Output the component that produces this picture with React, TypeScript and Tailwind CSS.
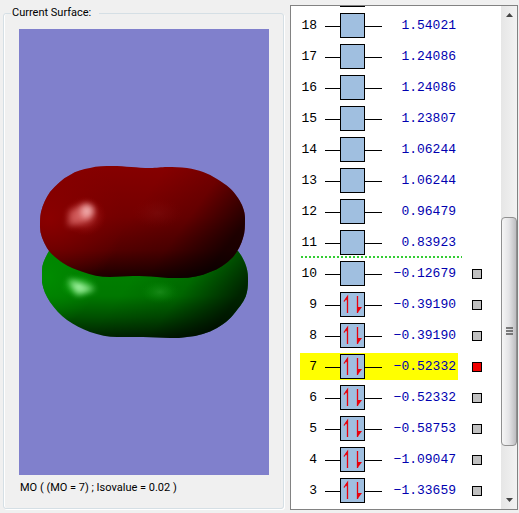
interface Orbital {
  mo: number;
  energy: string;
  occupied?: boolean;
  selectable?: boolean;
}

const LUMO_BOUNDARY = 11;
const SELECTED_MO = 7;

const orbitals: Orbital[] = [
  { mo: 18, energy: "1.54021" },
  { mo: 17, energy: "1.24086" },
  { mo: 16, energy: "1.24086" },
  { mo: 15, energy: "1.23807" },
  { mo: 14, energy: "1.06244" },
  { mo: 13, energy: "1.06244" },
  { mo: 12, energy: "0.96479" },
  { mo: 11, energy: "0.83923" },
  { mo: 10, energy: "−0.12679", selectable: true },
  { mo: 9, energy: "−0.39190", occupied: true, selectable: true },
  { mo: 8, energy: "−0.39190", occupied: true, selectable: true },
  { mo: 7, energy: "−0.52332", occupied: true, selectable: true },
  { mo: 6, energy: "−0.52332", occupied: true, selectable: true },
  { mo: 5, energy: "−0.58753", occupied: true, selectable: true },
  { mo: 4, energy: "−1.09047", occupied: true, selectable: true },
  { mo: 3, energy: "−1.33659", occupied: true, selectable: true },
];

const RED_LOBE =
  "M93 137C107 137 118 139 131 139C138 139 142 138 148 138C155 138 161 138 168 139C180 141 189 144 198 150C208 156 214 161 219 169C223 175 226 182 226 189C226 197 226 203 224 209C222 216 219 222 214 228C207 235 200 240 191 243C182 247 172 249 161 249C153 249 146 249 138 248C130 247 122 247 114 247C106 247 99 248 91 248C81 248 72 246 64 243C56 240 50 238 44 234C38 230 32 225 28 219C24 212 21 205 21 198C21 193 21 188 22 183C24 175 27 169 31 163C37 156 43 150 51 146C57 142 64 140 71 139C78 137 86 137 93 137Z";

const GREEN_LOBE =
  "M30 222C26 229 23 235 23 241V253C24 260 27 267 31 273C36 280 41 286 48 291C55 296 63 300 71 303C80 306 89 308 98 308H124C133 308 142 309 151 309C157 309 163 309 168 308C179 307 189 304 198 299C207 294 213 288 218 281C223 275 227 269 228 263C229 258 229 254 229 249C229 244 228 239 226 234C224 229 222 226 219 222L125 200Z";

function SurfaceView() {
  return (
    <svg viewBox="0 0 250 446" className="h-full w-full" role="img" aria-label="Molecular orbital 7">
      <defs>
        <linearGradient id="redBase" x1="0" y1="0" x2="0" y2="1">
          <stop offset="0" stopColor="#860000" />
          <stop offset="0.45" stopColor="#740000" />
          <stop offset="0.75" stopColor="#550000" />
          <stop offset="1" stopColor="#1c0000" />
        </linearGradient>
        <linearGradient id="greenBase" x1="0" y1="225" x2="0" y2="309" gradientUnits="userSpaceOnUse">
          <stop offset="0" stopColor="#008400" />
          <stop offset="0.5" stopColor="#007800" />
          <stop offset="0.75" stopColor="#005000" />
          <stop offset="1" stopColor="#002000" />
        </linearGradient>
        <linearGradient id="sideShade" x1="0.5" y1="0.3" x2="1" y2="0.5">
          <stop offset="0" stopColor="#000" stopOpacity="0" />
          <stop offset="0.5" stopColor="#000" stopOpacity="0.15" />
          <stop offset="1" stopColor="#000" stopOpacity="0.7" />
        </linearGradient>
        <radialGradient id="redEdge" cx="30" cy="190" r="75" gradientUnits="userSpaceOnUse">
          <stop offset="0" stopColor="#900000" stopOpacity="0.8" />
          <stop offset="1" stopColor="#880000" stopOpacity="0" />
        </radialGradient>
        <radialGradient id="greenEdge" cx="28" cy="248" r="50" gradientUnits="userSpaceOnUse">
          <stop offset="0" stopColor="#008c00" />
          <stop offset="1" stopColor="#008400" stopOpacity="0" />
        </radialGradient>
        <radialGradient id="redGlow">
          <stop offset="0" stopColor="#f07878" stopOpacity="0.65" />
          <stop offset="0.5" stopColor="#d84444" stopOpacity="0.4" />
          <stop offset="1" stopColor="#a00000" stopOpacity="0" />
        </radialGradient>
        <radialGradient id="greenGlow">
          <stop offset="0" stopColor="#80ff80" stopOpacity="0.5" />
          <stop offset="0.5" stopColor="#30c830" stopOpacity="0.35" />
          <stop offset="1" stopColor="#009000" stopOpacity="0" />
        </radialGradient>
        <filter id="soften" x="-100%" y="-100%" width="300%" height="300%" colorInterpolationFilters="sRGB">
          <feGaussianBlur stdDeviation="3" />
        </filter>
      </defs>

      <path d={GREEN_LOBE} fill="url(#greenBase)" />
      <path d={GREEN_LOBE} fill="url(#greenEdge)" />
      <path d={GREEN_LOBE} fill="url(#sideShade)" />
      <ellipse cx="60" cy="257" rx="20" ry="13" fill="url(#greenGlow)" />
      <path d="M49 250L60 254L77 260L58 266Z" fill="#b8ffb8" opacity="0.8" filter="url(#soften)" />
      <ellipse cx="141" cy="263" rx="20" ry="12" fill="url(#greenGlow)" opacity="0.35" />

      <path d={RED_LOBE} fill="url(#redBase)" />
      <path d={RED_LOBE} fill="url(#redEdge)" />
      <path d={RED_LOBE} fill="url(#sideShade)" />
      <ellipse cx="66" cy="187" rx="22" ry="20" fill="url(#redGlow)" opacity="0.7" />
      <path d="M50 182L68 174L75 180L71 191L60 195L49 197Z" fill="#ff9898" opacity="0.5" filter="url(#soften)" />
      <ellipse cx="68" cy="182" rx="6" ry="6" fill="#ffd0d0" opacity="0.7" filter="url(#soften)" />
      <ellipse cx="138" cy="184" rx="26" ry="16" fill="url(#redGlow)" opacity="0.1" />
    </svg>
  );
}

function OccupancyBox({ occupied }: { occupied?: boolean }) {
  return (
    <svg width="57" height="25" viewBox="0 0 57 25" className="block" aria-hidden="true">
      <path d="M0 13.5H57" stroke="#000" />
      <rect x="15.5" y="0.5" width="24" height="24" fill="#a0bfe0" stroke="#000" />
      {occupied && (
        <g fill="#e8000c" stroke="#e8000c">
          <path d="M22.5 21V4.5L19 9.5" fill="none" strokeWidth="1.3" />
          <path d="M20.5 7L22.5 4V9Z" stroke="none" />
          <path d="M32.5 4V21" strokeWidth="1.3" />
          <path d="M32 15H37L32.5 21Z" stroke="none" />
        </g>
      )}
    </svg>
  );
}

function OrbitalRow({ mo, energy, occupied, selectable }: Orbital) {
  const selected = mo === SELECTED_MO;
  const cell = selected
    ? "flex h-[27px] items-center bg-[#ffff00]"
    : "flex h-[27px] items-center";

  return (
    <tr className="h-[31px]">
      <td className="relative w-[25px] p-0">
        <div className={`${cell} justify-end pr-2`}>{mo}</div>
        {mo === LUMO_BOUNDARY && (
          <div className="absolute bottom-0 left-px h-[2px] w-[161px] bg-[repeating-linear-gradient(90deg,#33cc33_0_2px,transparent_2px_4px)]" />
        )}
      </td>
      <td className="w-[57px] p-0">
        <div className={cell}>
          <OccupancyBox occupied={occupied} />
        </div>
      </td>
      <td className="w-[76px] p-0 text-[#0000b0]">
        <div className={`${cell} justify-end pr-[2px]`}>{energy}</div>
      </td>
      <td className="p-0 pl-[14px]">
        {selectable && (
          <input
            type="checkbox"
            aria-label={`Surface for MO ${mo}`}
            defaultChecked={selected}
            className="block size-[10px] appearance-none border border-black bg-[#c0c0c0] checked:bg-[#f00000]"
          />
        )}
      </td>
    </tr>
  );
}

function ScrollBar() {
  return (
    <div className="flex w-4 shrink-0 flex-col bg-gradient-to-r from-[#e6e6e6] to-[#f2f2f2]">
      <button type="button" aria-label="Scroll up" className="flex h-[17px] items-center justify-center">
        <svg width="7" height="4" viewBox="0 0 7 4">
          <path d="M0 4L3.5 0L7 4Z" fill="#444" />
        </svg>
      </button>
      <div className="grow-[195] basis-0" />
      <div className="flex grow-[229] basis-0 items-center justify-center rounded-sm border border-[#909090] bg-gradient-to-r from-[#f6f6f6] via-[#e4e4e6] to-[#bdbdc0]">
        <svg width="7" height="9" viewBox="0 0 7 9">
          <path d="M0 1H7M0 4H7M0 7H7" stroke="#555" strokeWidth="2" strokeOpacity="0.75" />
        </svg>
      </div>
      <div className="grow-[46] basis-0" />
      <button type="button" aria-label="Scroll down" className="flex h-[17px] items-center justify-center">
        <svg width="7" height="4" viewBox="0 0 7 4">
          <path d="M0 0L3.5 4L7 0Z" fill="#444" />
        </svg>
      </button>
    </div>
  );
}

export default function App() {
  return (
    <main className="flex min-h-screen gap-[6px] bg-[#f0f0f0] pt-[5px] pr-px pb-[3px] pl-[3px] font-[Roboto,Arial,sans-serif] text-[11px] leading-4 text-black">
      <fieldset className="mb-px flex min-w-0 flex-1 flex-col rounded-[3px] border border-[#d5dfe5] pr-[14px] pl-[15px] shadow-[inset_1px_0_0_#fff,1px_1px_0_#fff]">
        <legend className="-ml-2 pr-2 pl-px">Current Surface:</legend>
        <div className="mt-2 min-h-0 flex-1 basis-0 bg-[#8080cc]">
          <SurfaceView />
        </div>
        <p className="pt-[5px] pb-3 pl-px">MO ( (MO = 7) ; Isovalue = 0.02 )</p>
      </fieldset>

      <section className="flex w-[228px] shrink-0 overflow-hidden border border-[#828282] bg-white">
        <div className="flex-1 overflow-hidden pb-[2px] pl-[9px] font-['Liberation_Mono',monospace] text-[13px]">
          {/* bottom edge of the box scrolled out above */}
          <div className="mb-[3px] ml-10 h-px w-[25px] bg-black" />
          <table className="w-full table-fixed border-collapse">
            <tbody>
              {orbitals.map((orbital) => (
                <OrbitalRow key={orbital.mo} {...orbital} />
              ))}
            </tbody>
          </table>
        </div>
        <ScrollBar />
      </section>
    </main>
  );
}
